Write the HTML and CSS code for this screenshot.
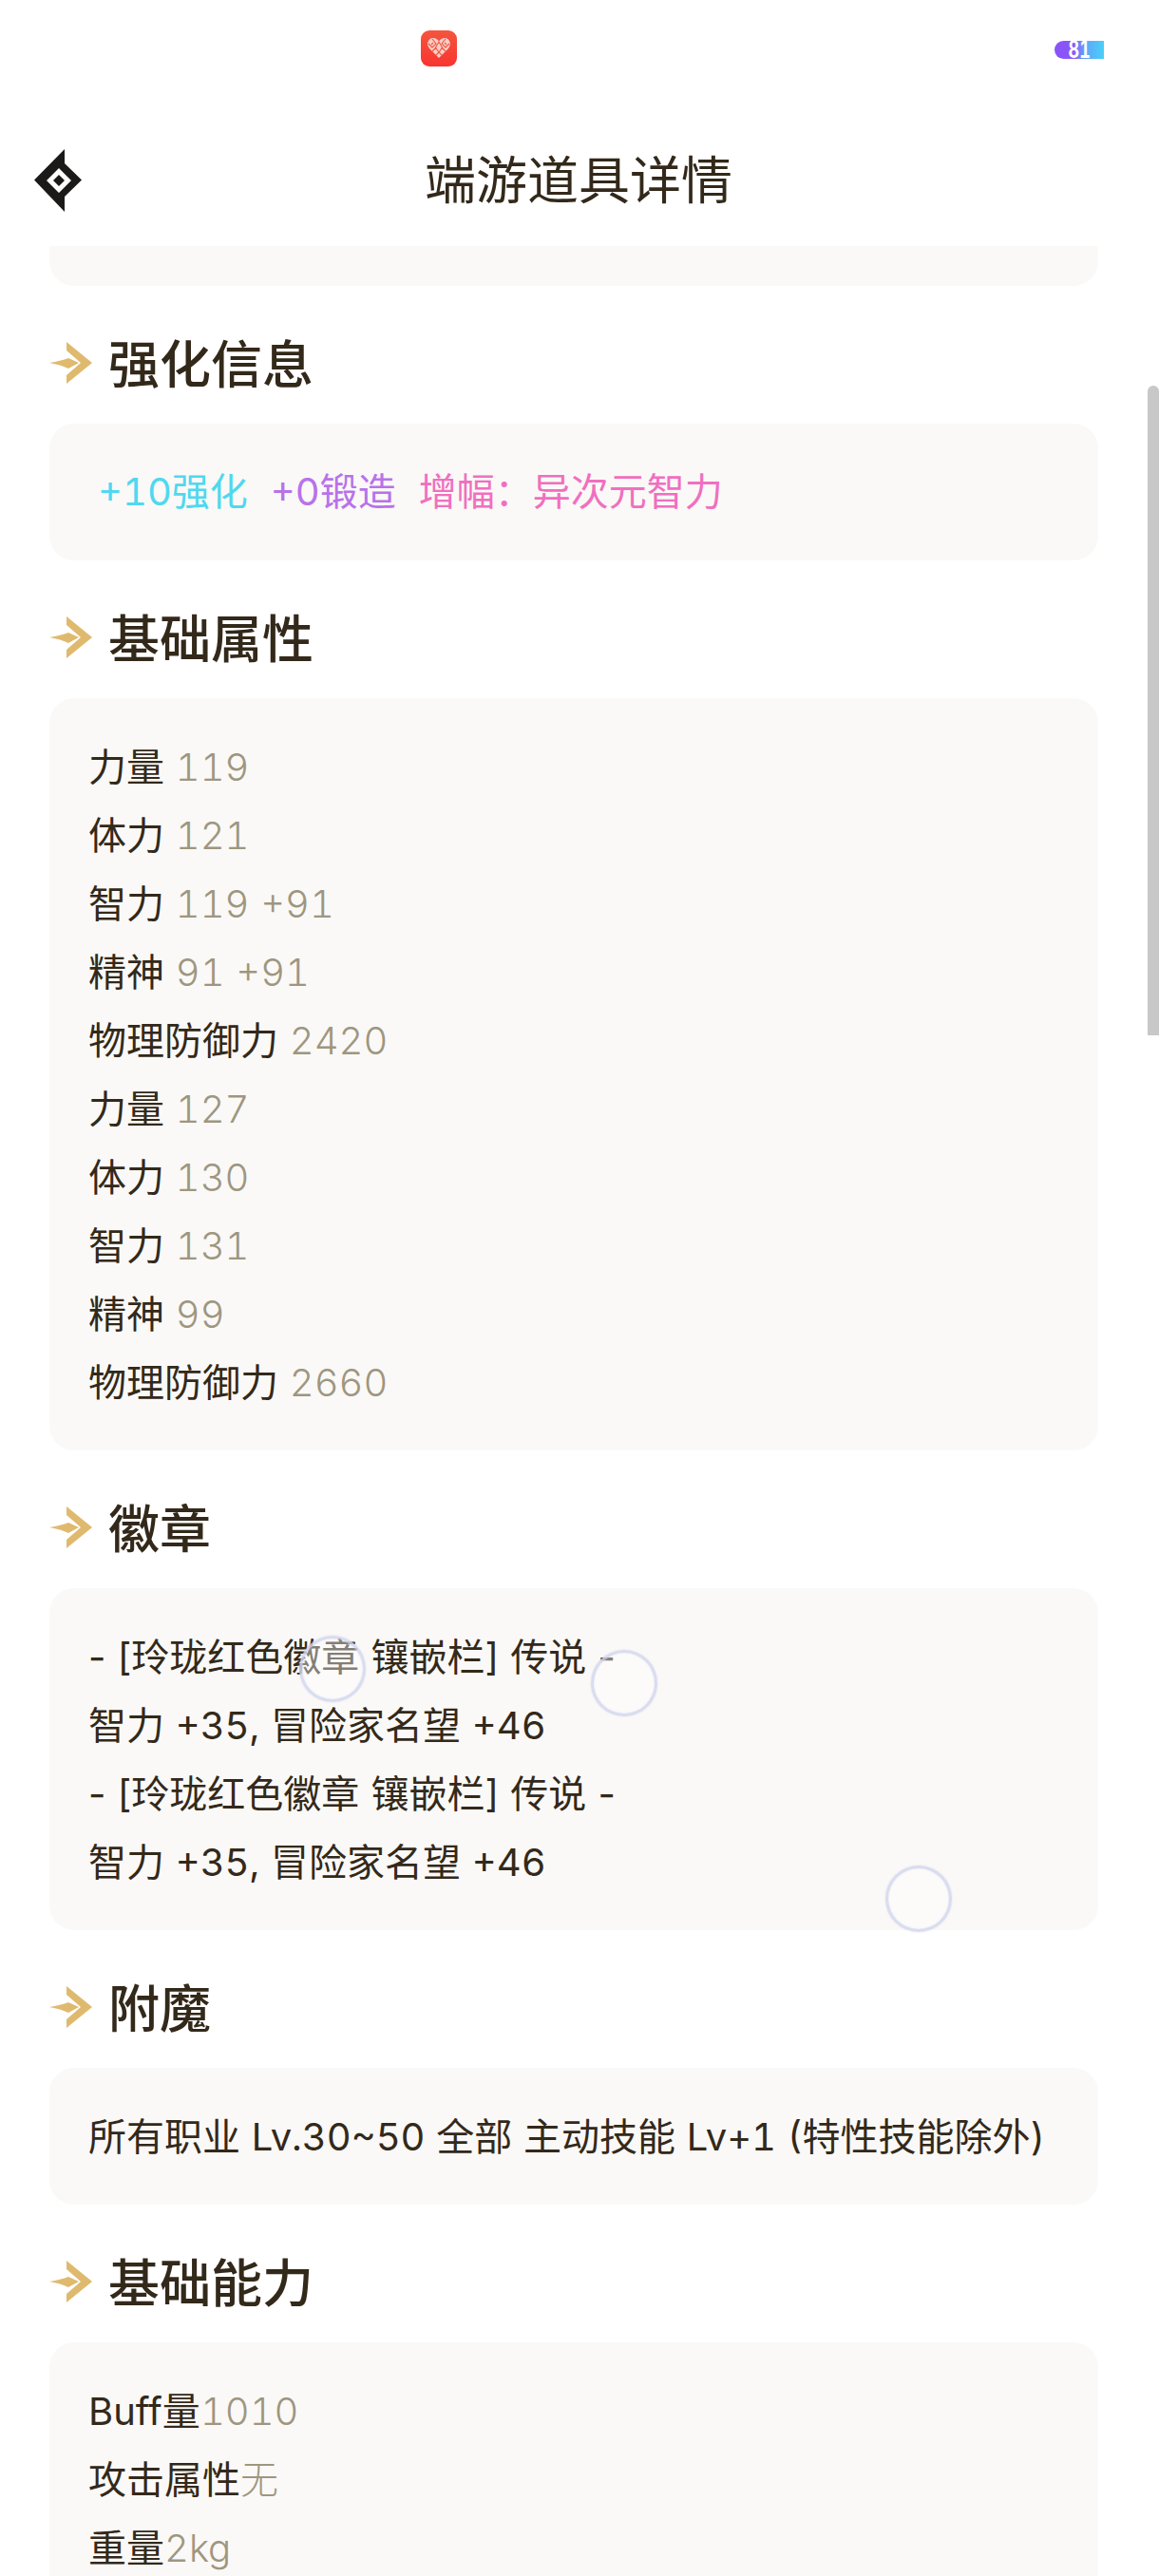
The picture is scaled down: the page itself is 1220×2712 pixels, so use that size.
FILE: index.html
```html
<!DOCTYPE html>
<html lang="zh-CN">
  <head>
    <meta charset="utf-8">
    <title>端游道具详情</title>
    <link rel="stylesheet" href="styles.css">
  </head>
  <body>
    <svg class="defs" width="0" height="0">
      <symbol id="arrow" viewBox="0 0 46 46">
        <path fill="#dfba6e" d="M0 23 Q12 21 20 18 L31 23 L20 29 Q12 25 0 23 Z"/>
        <path fill="#dfba6e" d="M18 1 L45 23 L18 45 L18 36 L33 23 L18 10 Z"/>
      </symbol>
    </svg>
    <div class="app">
      <div class="status-bar">
        <svg class="app-icon" viewBox="0 0 38 38">
          <defs>
            <linearGradient id="red" x1="0" y1="0" x2="0" y2="1">
              <stop offset="0" stop-color="#f4553f"/>
              <stop offset="1" stop-color="#f9342f"/>
            </linearGradient>
          </defs>
          <rect width="38" height="38" rx="9" fill="url(#red)"/>
          <path fill="#f6cfc9" d="M19 29 L9 19 C5 14 8 8 13 8 C15.500 8 17.500 9.500 19 11.500 C20.500 9.500 22.500 8 25 8 C30 8 33 14 29 19 Z"/>
          <path stroke="#f4553f" stroke-width="1.100" fill="none" d="M12 9 L16 14 L12 18 L8 14 M26 9 L22 14 L26 18 L30 14 M19 12 L15.500 18 L19 23 L22.500 18 Z M12 22 L16 18 M26 22 L22 18 M16 26 L19 23 L22 26 M13 13 L11 15 M25 13 L27 15"/>
        </svg>
        <div class="battery"><span>81</span></div>
      </div>
      <header class="top-bar">
        <svg class="logo" viewBox="0 0 50 66">
          <path fill="#1b1a18" fill-rule="evenodd" d="M32 0 L32 15 L50 32.500 L32 50 L32 66 L0 32.500 Z M26 20 L13 33 L26 46 L39 33 Z"/>
          <path fill="#1b1a18" d="M26 27 L32 33 L26 39 L20 33 Z"/>
        </svg>
        <h1>端游道具详情</h1>
      </header>
      <main class="content">
        <div class="panel panel-stub"></div>

        <h2 class="section-title"><svg><use href="#arrow"/></svg><span>强化信息</span></h2>
        <div class="panel panel-upgrade">
          <span class="cyan">+10强化</span>
          <span class="purple">+0锻造</span>
          <span class="pink">增幅：异次元智力</span>
        </div>

        <h2 class="section-title"><svg><use href="#arrow"/></svg><span>基础属性</span></h2>
        <div class="panel">
          <p>力量 <em>119</em></p>
          <p>体力 <em>121</em></p>
          <p>智力 <em>119 +91</em></p>
          <p>精神 <em>91 +91</em></p>
          <p>物理防御力 <em>2420</em></p>
          <p>力量 <em>127</em></p>
          <p>体力 <em>130</em></p>
          <p>智力 <em>131</em></p>
          <p>精神 <em>99</em></p>
          <p>物理防御力 <em>2660</em></p>
        </div>

        <h2 class="section-title"><svg><use href="#arrow"/></svg><span>徽章</span></h2>
        <div class="panel">
          <p class="plain-dash">- [玲珑红色徽章 镶嵌栏] 传说 -</p>
          <p>智力 +35, 冒险家名望 +46</p>
          <p class="plain-dash">- [玲珑红色徽章 镶嵌栏] 传说 -</p>
          <p>智力 +35, 冒险家名望 +46</p>
        </div>

        <h2 class="section-title"><svg><use href="#arrow"/></svg><span>附魔</span></h2>
        <div class="panel">
          <p>所有职业 Lv.30~50 全部 主动技能 Lv+1 (特性技能除外)</p>
        </div>

        <h2 class="section-title"><svg><use href="#arrow"/></svg><span>基础能力</span></h2>
        <div class="panel">
          <p>Buff量<em>1010</em></p>
          <p>攻击属性<em>无</em></p>
          <p>重量<em>2kg</em></p>
        </div>
      </main>
      <div class="scroll-thumb"></div>
      <div class="touch-dot dot-one"></div>
      <div class="touch-dot dot-two"></div>
      <div class="touch-dot dot-three"></div>
    </div>
  </body>
</html>
```

FILE: styles.css
```css
html, body {
  margin: 0;
  background: #fff;
}

body {
  font-family: "Inter", "Noto Sans CJK SC", sans-serif;
  font-variant-numeric: tabular-nums;
  color: #33291a;
}

.defs {
  position: absolute;
}

.app {
  position: relative;
  width: 1220px;
  height: 2712px;
  overflow: hidden;
  display: flex;
  flex-direction: column;
}

.status-bar {
  height: 102px;
  flex: none;
  display: flex;
  justify-content: space-between;
  padding: 32px 58px 0 443px;
  box-sizing: border-box;
}

.app-icon {
  width: 38px;
  height: 38px;
}

.battery {
  width: 52px;
  height: 19px;
  margin-top: 11px;
  border-radius: 10px 0 0 10px;
  background: linear-gradient(90deg, #8a55f8 0, #8a55f8 35%, #60a8f8 65%, #48d0f8 100%);
  color: #fff;
  font-size: 25px;
  line-height: 19px;
  font-weight: 700;
  text-align: center;
}

.battery span {
  display: inline-block;
  transform: scaleX(0.72);
}

.top-bar {
  height: 157px;
  flex: none;
  display: flex;
  align-items: center;
  justify-content: center;
  position: relative;
}

.top-bar h1 {
  margin: 20px 0 0 -2px;
  font-size: 54px;
  font-weight: 400;
  line-height: 64px;
}

.logo {
  position: absolute;
  left: 36px;
  top: 55px;
  width: 50px;
  height: 66px;
}

.content {
  flex: 1;
  overflow: hidden;
  padding: 0 64px 0 52px;
}

.panel {
  background: #faf9f7;
  border-radius: 26px;
  padding: 37px 41px 35px;
  font-size: 40px;
  line-height: 72px;
  word-spacing: 1px;
}

.panel p {
  margin: 0;
}

.panel em {
  font-style: normal;
  font-weight: 300;
  color: #9e9680;
}

.plain-dash {
  font-variant-numeric: normal;
}

.panel-stub {
  height: 42px;
  padding: 0;
  border-radius: 0 0 26px 26px;
}

.panel-upgrade {
  display: flex;
  gap: 24px;
  padding-left: 51px;
  padding-top: 36px;
  padding-bottom: 36px;
}

.cyan { color: #4fd8f0; }
.purple { color: #b872ea; }
.pink { color: #f06fc0; }

.section-title {
  display: flex;
  align-items: center;
  gap: 16px;
  height: 54px;
  margin: 54px 0 37px;
  font-size: 54px;
  font-weight: 500;
}

.section-title span {
  padding-top: 6px;
  line-height: 54px;
}

.section-title svg {
  width: 46px;
  height: 46px;
}

.scroll-thumb {
  position: absolute;
  right: 0;
  top: 406px;
  width: 12px;
  height: 684px;
  border-radius: 6px 6px 0 0;
  background: #c8c8c8;
}

.touch-dot {
  position: absolute;
  width: 70px;
  height: 70px;
  box-sizing: border-box;
  border-radius: 50%;
  border: 3px solid rgba(205, 210, 235, 0.75);
  background: rgba(255, 255, 255, 0.4);
  box-shadow: 0 0 2px rgba(205, 210, 235, 0.7), inset 0 0 2px rgba(205, 210, 235, 0.7);
}

.dot-one { left: 315px; top: 1722px; }
.dot-two { left: 622px; top: 1737px; }
.dot-three { left: 932px; top: 1964px; }
```
